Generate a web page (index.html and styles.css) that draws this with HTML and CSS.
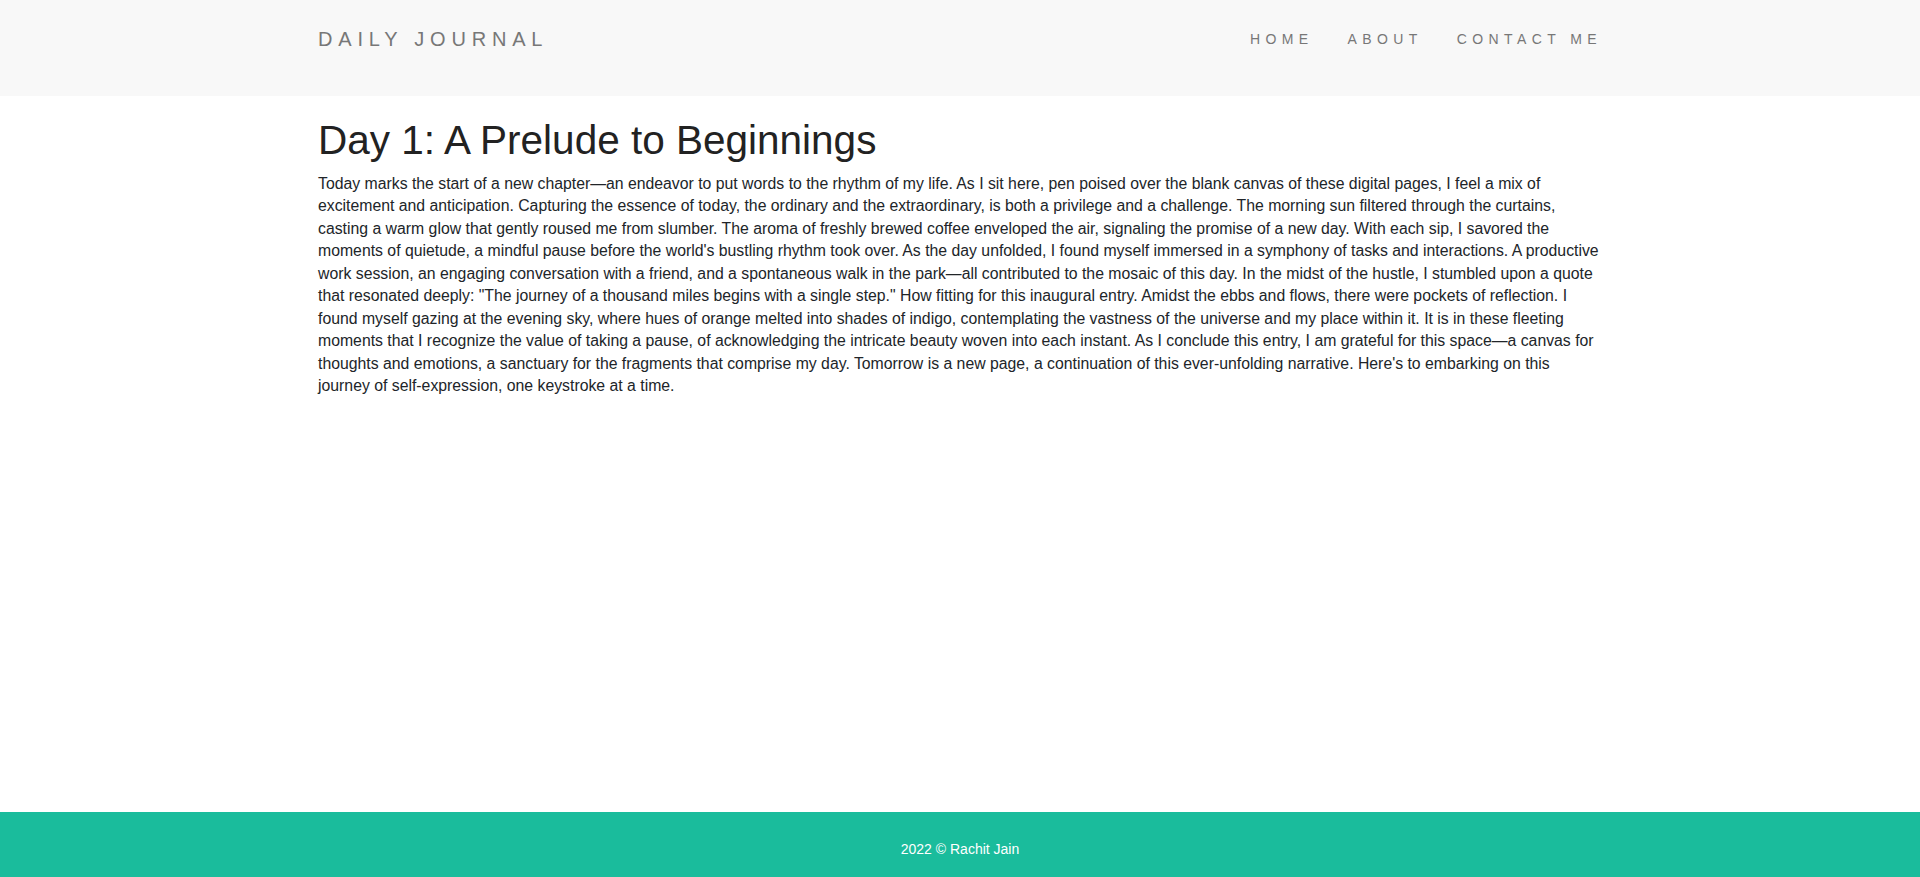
FILE: index.html
```html
<!DOCTYPE html>
<html lang="en">
<head>
<meta charset="utf-8">
<title>Daily Journal</title>
<link rel="stylesheet" href="styles.css">
</head>
<body>
<header class="navbar">
  <div class="container nav-inner">
    <a class="brand" href="#">DAILY JOURNAL</a>
    <ul class="nav-links">
      <li><a href="#">HOME</a></li>
      <li><a href="#">ABOUT</a></li>
      <li><a href="#">CONTACT ME</a></li>
    </ul>
  </div>
</header>
<main class="container content">
  <h1 class="post-title">Day 1: A Prelude to Beginnings</h1>
  <p class="post-body">Today marks the start of a new chapter—an endeavor to put words to the rhythm of my life. As I sit here, pen poised over the blank canvas of these digital pages, I feel a mix of excitement and anticipation. Capturing the essence of today, the ordinary and the extraordinary, is both a privilege and a challenge. The morning sun filtered through the curtains, casting a warm glow that gently roused me from slumber. The aroma of freshly brewed coffee enveloped the air, signaling the promise of a new day. With each sip, I savored the moments of quietude, a mindful pause before the world's bustling rhythm took over. As the day unfolded, I found myself immersed in a symphony of tasks and interactions. A productive work session, an engaging conversation with a friend, and a spontaneous walk in the park—all contributed to the mosaic of this day. In the midst of the hustle, I stumbled upon a quote that resonated deeply: "The journey of a thousand miles begins with a single step." How fitting for this inaugural entry. Amidst the ebbs and flows, there were pockets of reflection. I found myself gazing at the evening sky, where hues of orange melted into shades of indigo, contemplating the vastness of the universe and my place within it. It is in these fleeting moments that I recognize the value of taking a pause, of acknowledging the intricate beauty woven into each instant. As I conclude this entry, I am grateful for this space—a canvas for thoughts and emotions, a sanctuary for the fragments that comprise my day. Tomorrow is a new page, a continuation of this ever-unfolding narrative. Here's to embarking on this journey of self-expression, one keystroke at a time.</p>
</main>
<footer class="footer">
  <p class="copyright">2022 © Rachit Jain</p>
</footer>
</body>
</html>
```
FILE: styles.css
```css
html, body {
  margin: 0;
  padding: 0;
}
body {
  font-family: "Liberation Sans", Arial, sans-serif;
  color: #212529;
  background: #fff;
  min-height: 100vh;
  display: flex;
  flex-direction: column;
}
.container {
  width: 1284px;
  margin: 0 auto;
}
.navbar {
  background: #f8f8f8;
  height: 96px;
  box-sizing: border-box;
}
.nav-inner {
  display: flex;
  justify-content: space-between;
  align-items: flex-start;
  padding-top: 29px;
}
.brand {
  font-size: 20px;
  line-height: 20px;
  letter-spacing: 5.8px;
  color: #777;
  text-decoration: none;
}
.nav-links {
  list-style: none;
  margin: 3px 0 0 0;
  padding: 0;
  display: flex;
  gap: 34px;
}
.nav-links a {
  font-size: 14px;
  line-height: 14px;
  letter-spacing: 5.4px;
  color: #777;
  text-decoration: none;
  display: block;
}
.content {
  flex: 1;
}
.post-title {
  font-size: 40.5px;
  font-weight: 400;
  line-height: 1.2;
  margin: 20px 0 8px 0;
  color: #222;
}
.post-body {
  font-size: 15.8px;
  line-height: 22.5px;
  margin: 0;
}
.footer {
  background: #1abc9c;
  height: 65px;
  box-sizing: border-box;
  padding-top: 27px;
  text-align: center;
}
.copyright {
  margin: 0;
  font-size: 14px;
  line-height: 20px;
  color: #fff;
}
```
